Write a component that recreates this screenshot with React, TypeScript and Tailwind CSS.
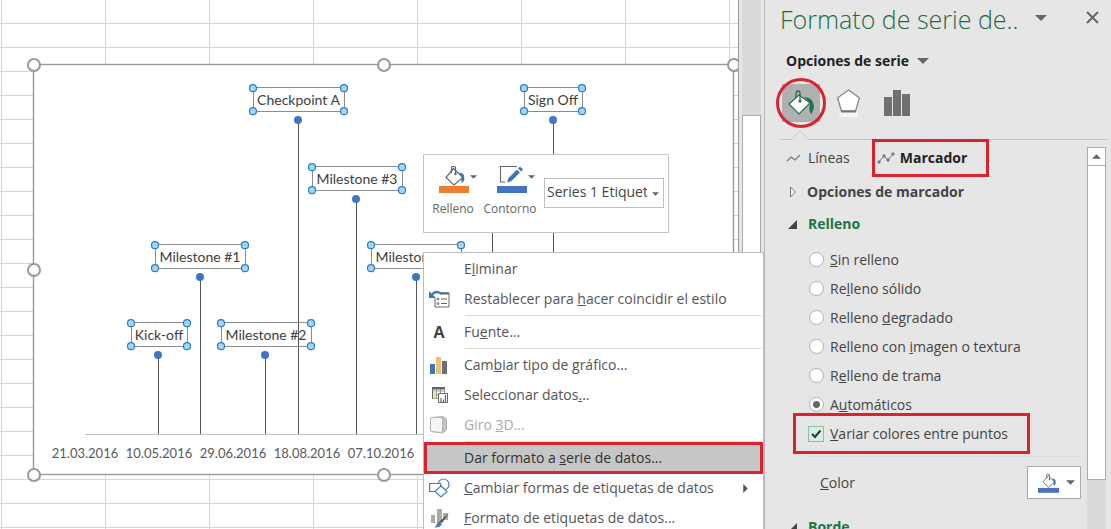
import type { ReactNode } from "react";

type LabelProps = { text: string; x: number; y: number; w: number; stem: number };

const labels: LabelProps[] = [
    { text: "Checkpoint A", x: 253, y: 88, w: 91, stem: 298 },
    { text: "Sign Off", x: 524, y: 88, w: 58, stem: 553 },
    { text: "Milestone #3", x: 312, y: 167, w: 90, stem: 356 },
    { text: "Milestone #1", x: 155, y: 245, w: 90, stem: 200 },
    { text: "Milestone #4", x: 371, y: 245, w: 90, stem: 416 },
    { text: "Kick-off", x: 131, y: 323, w: 56, stem: 158 },
    { text: "Milestone #2", x: 221, y: 323, w: 90, stem: 265 },
];

const dates = ["21.03.2016", "10.05.2016", "29.06.2016", "18.08.2016", "07.10.2016"];

const chartHandles = [
    [34, 65],
    [384, 65],
    [734, 65],
    [34, 270],
    [34, 475],
    [384, 475],
];

function Chart() {
    return (
        <svg width="711" height="424" viewBox="27 58 711 424" className="block shrink-0">
            <rect x="33.5" y="64.5" width="700" height="410" fill="#fff" stroke="#999" strokeWidth="1.4" />
            <path d="M85 434.5H700" stroke="#bfbfbf" />
            <path d="M492.5 230V434" stroke="#555" />
            {labels.map((l) => (
                <g key={l.text}>
                    <path d={`M${l.stem + 0.5} ${l.y + 32}V434`} stroke="#555" />
                    <circle cx={l.stem} cy={l.y + 32} r="4" fill="#4472c4" />
                </g>
            ))}
            {labels.map((l) => (
                <g key={l.text}>
                    <rect x={l.x + 0.5} y={l.y - 0.5} width={l.w} height="24" fill="none" stroke="#8c8c8c" />
                    {[0, l.w].map((dx) =>
                        [0, 23].map((dy) => (
                            <circle
                                key={`${dx}-${dy}`}
                                cx={l.x + dx}
                                cy={l.y + dy + 0.2}
                                r="3.5"
                                fill="#a6d5fa"
                                stroke="#2a7fc4"
                                strokeWidth="1.2"
                            />
                        ))
                    )}
                    <text x={l.x + l.w / 2} y={l.y + 17} textAnchor="middle" fill="#404040" className="font-['Lato',sans-serif] text-[14px]">
                        {l.text}
                    </text>
                </g>
            ))}
            {dates.map((d, i) => (
                <text key={d} x={85 + i * 74} y="458" textAnchor="middle" fill="#595959" className="font-['Lato',sans-serif] text-[13px]">
                    {d}
                </text>
            ))}
            {chartHandles.map(([x, y]) => (
                <circle key={`${x}-${y}`} cx={x} cy={y} r="6" fill="#fff" stroke="#999" strokeWidth="2" />
            ))}
        </svg>
    );
}

function Caret({ className }: { className?: string }) {
    return (
        <svg viewBox="0 0 12 6" className={className} fill="#666">
            <path d="M0 0h12L6 6z" />
        </svg>
    );
}

function Bucket({ bar, className }: { bar: string; className: string }) {
    return (
        <svg viewBox="0 0 30 28" className={className}>
            <path d="M14.500 3.500L24 12.500L15 20L7 12.500Z" fill="#fff" stroke="#666" strokeWidth="1.200" />
            <path d="M12.500 8V2.500Q12.500 1.500 13.500 1.500H15.500Q16.500 1.500 16.500 2.500V9" fill="none" stroke="#666" strokeWidth="1.200" />
            <circle cx="16.500" cy="9" r="1.200" fill="#666" />
            <path d="M20 7.500Q25 8 25.200 11.500V15.500L22.600 18.500L22.200 11Z" fill="#3f78b0" />
            <path d="M0 21h30v7H0z" fill={bar} />
        </svg>
    );
}

function MiniToolbar() {
    return (
        <div className="absolute left-[423px] top-[154px] flex h-[79px] w-[246px] items-start border border-[#c6c6c6] bg-white pt-2">
            <button type="button" className="ml-[7px] w-[44px] text-xs text-[#666]">
                <span className="flex items-center gap-px">
                    <Bucket bar="#ed7d31" className="ml-[8px] h-[28px] w-[30px] shrink-0 translate-y-[2px]" />
                    <Caret className="h-[4px] w-[7px] shrink-0" />
                </span>
                <span className="mt-[10px] block">Relleno</span>
            </button>
            <button type="button" className="ml-[7px] w-[56px] text-xs text-[#666]">
                <span className="flex items-center gap-px">
                    <svg viewBox="0 0 30 28" className="ml-[15px] h-[28px] w-[30px] shrink-0 translate-y-[2px]">
                        <path d="M20 1.500H3.500V17H8" fill="none" stroke="#666" strokeWidth="1.100" />
                        <path d="M10 17.500L11.500 13L20 4.500L23 7.500L14.500 16Z" fill="#3f78b0" />
                        <path d="M21 3.500L23 1.500L26 4.500L24 6.500Z" fill="#3f78b0" />
                        <path d="M0 21h30v7H0z" fill="#4472c4" />
                    </svg>
                    <Caret className="h-[4px] w-[7px] shrink-0" />
                </span>
                <span className="mt-[10px] block">Contorno</span>
            </button>
            <div className="relative ml-[6px] mt-[15px] h-[30px] w-[120px]">
                <select aria-label="Elemento del gráfico" className="h-full w-full appearance-none overflow-hidden border border-[#c0c0c0] bg-white pb-[2px] pl-[2px] pr-4 text-sm text-[#444]">
                    <option>Series 1 Etiquetas de datos</option>
                </select>
                <Caret className="pointer-events-none absolute right-[5px] top-[14px] h-[4px] w-[7px]" />
            </div>
        </div>
    );
}

function MenuItem({ icon, children, className = "text-[#555]" }: { icon?: ReactNode; children: ReactNode; className?: string }) {
    return (
        <li>
            <button type="button" className={`flex h-[30px] w-full items-center text-left ${className}`}>
                <span className="flex w-[39px] shrink-0 items-center pl-1">{icon}</span>
                {children}
            </button>
        </li>
    );
}

function Separator() {
    return <li className="my-px ml-[40px] h-px bg-[#dcdcdc]" />;
}

function ContextMenu() {
    return (
        <ul className="absolute left-[423px] top-[252px] z-10 w-[341px] border border-[#bdbdbd] bg-white px-px pt-px text-sm">
            <MenuItem>
                <span>E<u>l</u>iminar</span>
            </MenuItem>
            <MenuItem
                icon={
                    <svg width="22" height="20" viewBox="0 0 22 20" fill="none">
                        <path d="M10 4H20V18H6V9" stroke="#666" />
                        <path d="M11 3.500h9v2h-9z" fill="#666" />
                        <path d="M12 10h6M12 14.500h6" stroke="#666" />
                        <circle cx="9" cy="10" r="1" stroke="#666" />
                        <circle cx="9" cy="14.500" r="1" stroke="#666" />
                        <path d="M3 6Q6 1 12 4.500" stroke="#3f78b0" strokeWidth="2.400" />
                        <path d="M0 2V9H7Z" fill="#3f78b0" />
                    </svg>
                }
            >
                <span>Restablecer para <u>h</u>acer coincidir el estilo</span>
            </MenuItem>
            <Separator />
            <MenuItem icon={<b className="w-[20px] text-center text-base text-[#444]">A</b>}>
                <span>Fu<u>e</u>nte...</span>
            </MenuItem>
            <Separator />
            <MenuItem
                icon={
                    <svg width="20" height="20" viewBox="0 0 20 20">
                        <path d="M1 9h5v10H1z" fill="#3f78b0" />
                        <path d="M7 2h5v17H7z" fill="#e8c27c" />
                        <path d="M13 6h5v13h-5z" fill="#6e6e6e" />
                    </svg>
                }
            >
                <span>Cam<u>b</u>iar tipo de gráfico...</span>
            </MenuItem>
            <MenuItem
                icon={
                    <svg width="20" height="20" viewBox="0 0 20 20" fill="none">
                        <path d="M3.500 2.500h12v11h-12zM3.500 6h12M3.500 9.500h12M7.500 4v9M11.500 4v9" stroke="#999" />
                        <path d="M4 6.500h3v7h-3z" fill="#f2dcb0" />
                        <path d="M3 2h13v2.500H3zM3 2h1v12H3z" fill="#666" />
                        <path d="M9.500 8.500h9v9h-9z" fill="#fff" stroke="#666" />
                        <path d="M12 17v-4M14.500 17v-2.500M16.500 17v-7" stroke="#666" strokeWidth="1.200" />
                    </svg>
                }
            >
                <span>Seleccionar datos<u>.</u>..</span>
            </MenuItem>
            <MenuItem
                className="text-[#aaa]"
                icon={
                    <svg width="20" height="20" viewBox="0 0 20 20" stroke="#b3b3b3" strokeLinejoin="round">
                        <path d="M3 2.500L14 1.500L17.500 4V15L13.500 18L3 16.500Q1.500 16 1.500 15V4Q1.500 3 3 2.500Z" fill="#c4c4c4" />
                        <path d="M3 2.500H12Q13.500 2.500 13.500 4V16L12 17.500L3 16.500Q1.500 16 1.500 15V4Q1.500 2.500 3 2.500Z" fill="#f5f5f5" />
                    </svg>
                }
            >
                <span>Giro <u>3</u>D...</span>
            </MenuItem>
            <Separator />
            <MenuItem className="bg-[#c6c6c6] text-[#333] outline-3 -outline-offset-2 outline-[#d9232e]">
                <span>Dar formato a <u>s</u>erie de datos...</span>
            </MenuItem>
            <MenuItem
                icon={
                    <svg width="22" height="20" viewBox="0 0 22 20" fill="#fff" stroke="#4a7ebb" strokeWidth="1.200">
                        <circle cx="14.500" cy="6.500" r="5.500" />
                        <path d="M.6 5.500h11v8H.6z" />
                        <path d="M12 8l6 5.500-6 5.500-6-5.500z" />
                    </svg>
                }
            >
                <span><u>C</u>ambiar formas de etiquetas de datos</span>
                <svg viewBox="0 0 5 10" className="ml-auto mr-[14px] h-[9px] w-[5px]" fill="#555">
                    <path d="M0 0l5 5-5 5z" />
                </svg>
            </MenuItem>
            <MenuItem
                icon={
                    <svg width="22" height="22" viewBox="0 0 22 22">
                        <path d="M2 8h4v8H2zM8 2h5v14H8zM14 6h5v7h-5z" fill="#aaa" />
                        <path d="M20 6L13 16L10.500 14.500Z" fill="#555" />
                        <path d="M10 14.500L13 17Q11 21 5 20.500Q8 19 8 16.500Z" fill="#3f78b0" />
                    </svg>
                }
            >
                <span><u>F</u>ormato de etiquetas de datos...</span>
            </MenuItem>
        </ul>
    );
}

function Radio({ id, checked, children }: { id: string; checked?: boolean; children: ReactNode }) {
    return (
        <div className="flex h-[29px] items-center gap-[6px]">
            <input
                type="radio"
                name="relleno"
                id={id}
                defaultChecked={checked}
                className="size-[15px] appearance-none rounded-full border border-[#b0b0b0] bg-white checked:bg-[radial-gradient(circle,#666_0_3px,#fff_4px)]"
            />
            <label htmlFor={id}>{children}</label>
        </div>
    );
}

function PaneHeader() {
    return (
        <header className="pl-[15px]">
            <div className="flex h-[40px] items-center">
                <h1 className="whitespace-nowrap text-[25px] font-light text-[#1e6b41]">Formato de serie de..</h1>
                <button type="button" aria-label="Opciones del panel" className="mb-[5px] ml-auto">
                    <Caret className="h-[6px] w-[12px]" />
                </button>
                <button type="button" aria-label="Cerrar" className="mb-[5px] ml-[39px] mr-[12px]">
                    <svg width="13" height="13" viewBox="0 0 13 13" stroke="#666" strokeWidth="2">
                        <path d="M1 1l11 11M12 1L1 12" />
                    </svg>
                </button>
            </div>
            <button type="button" className="ml-[6px] flex h-[42px] items-center gap-2 font-bold text-[#222]">
                Opciones de serie
                <Caret className="h-[6px] w-[12px]" />
            </button>
            <div className="ml-[2px] mt-[2px] flex items-center">
                <button type="button" aria-label="Relleno y línea" className="relative flex size-[38px] items-center justify-center bg-[#b0b0b0]">
                    <svg width="28" height="28" viewBox="0 0 28 28">
                        <path d="M12 6L23 14L12 25L2 15Z" fill="#fff" stroke="#217346" strokeWidth="1.200" />
                        <path d="M9 9V4.500Q9 2 11 2T13 4.500V12" fill="none" stroke="#217346" strokeWidth="1.300" />
                        <circle cx="13" cy="12" r="1.600" fill="#217346" />
                        <path d="M17 8Q26 8.500 27 17Q27 20 24.500 25Q21.500 22 22.500 17L23.500 14Z" fill="#217346" />
                    </svg>
                    <span className="absolute -inset-[6px] rounded-full border-3 border-[#d9232e]" />
                </button>
                <button type="button" aria-label="Efectos" className="ml-4">
                    <svg width="26" height="30" viewBox="0 0 26 30">
                        <path d="M4 24H21L22 29H3Z" fill="#f5f5f5" />
                        <path d="M12.500 2L23.500 10L19.500 23H5.500L1.500 10Z" fill="#fff" stroke="#888" strokeWidth="1.300" />
                        <path d="M5 23.500h15" stroke="#777" strokeWidth="2" />
                    </svg>
                </button>
                <button type="button" aria-label="Opciones de serie" className="ml-[22px]">
                    <svg width="26" height="26" viewBox="0 0 26 26" fill="#707070">
                        <path d="M0 7h8v19H0zM9 0h8v26H9zM18 4h8v22h-8z" />
                    </svg>
                </button>
            </div>
        </header>
    );
}

function FormatPane() {
    return (
        <aside className="flex w-[347px] shrink-0 flex-col border-l border-[#b8b8b8] bg-[#e6e6e6] text-sm text-[#444]">
            <PaneHeader />
            <div className="ml-[15px] mr-1 mt-[8px] flex h-[10px] shrink-0 items-end">
                <span className="h-px w-3 bg-[#c6c6c6]" />
                <svg width="16" height="10" viewBox="0 0 16 10" fill="none" stroke="#c6c6c6">
                    <path d="M0 9.500L8 .5L16 9.500" />
                </svg>
                <span className="h-px flex-1 bg-[#c6c6c6]" />
            </div>
            <div className="-mt-px flex flex-1 pr-[5px]">
                <div className="flex-1 pl-[21px]">
                    <div className="flex items-center">
                        <button type="button" className="flex items-center gap-[7px]">
                            <svg width="15" height="9" viewBox="0 0 15 9" fill="none" stroke="#777" strokeWidth="1.200">
                                <path d="M1 7L5 3L9 6L14 1" />
                            </svg>
                            Líneas
                        </button>
                        <button type="button" className="ml-[22px] flex h-[38px] w-[117px] items-center gap-[5px] border-3 border-[#d9232e] pl-[2px] font-bold text-[#222]">
                            <svg width="18" height="13" viewBox="0 0 18 13" fill="#777" stroke="#777">
                                <path d="M2 10L7 4L11 8L16 2" fill="none" />
                                <circle cx="2" cy="10" r="1.200" />
                                <circle cx="7" cy="4" r="1.200" />
                                <circle cx="11" cy="8" r="1.200" />
                                <circle cx="16" cy="2" r="1.200" />
                            </svg>
                            Marcador
                        </button>
                    </div>
                    <button type="button" className="flex h-[30px] items-center gap-[11px] pl-1 font-bold">
                        <svg width="6" height="12" viewBox="0 0 6 12" fill="#fff" stroke="#777">
                            <path d="M.5 1L5.500 6L.5 11Z" />
                        </svg>
                        Opciones de marcador
                    </button>
                    <button type="button" className="flex h-[34px] items-center gap-[11px] pl-[2px] font-bold text-[#217346]">
                        <svg width="9" height="9" viewBox="0 0 9 9" fill="#444">
                            <path d="M9 0V9H0Z" />
                        </svg>
                        Relleno
                    </button>
                    <div className="mt-1 pl-[23px]">
                        <Radio id="sin"><u>S</u>in relleno</Radio>
                        <Radio id="solido">Re<u>l</u>leno sólido</Radio>
                        <Radio id="degradado">Relleno <u>d</u>egradado</Radio>
                        <Radio id="imagen">Relleno con <u>i</u>magen o textura</Radio>
                        <Radio id="trama">R<u>e</u>lleno de trama</Radio>
                        <Radio id="auto" checked>A<u>u</u>tomáticos</Radio>
                    </div>
                    <div className="relative -mt-[6px] ml-[7px] flex h-[41px] w-[237px] items-center gap-[6px] border-3 border-[#d9232e] pl-3">
                        <span className="relative flex">
                            <input type="checkbox" id="variar" defaultChecked className="size-4 appearance-none border border-[#8cbfa3] bg-[#d3f0e0]" />
                            <svg viewBox="0 0 16 16" className="pointer-events-none absolute inset-0" fill="none" stroke="#333" strokeWidth="2">
                                <path d="M4 8L7 11L12.500 4.500" />
                            </svg>
                        </span>
                        <label htmlFor="variar"><u>V</u>ariar colores entre puntos</label>
                    </div>
                    <div className="ml-[22px] mr-[6px] mt-[2px] flex items-center justify-between border-t border-[#dcdcdc] pl-3 pt-[9px]">
                        <span><u>C</u>olor</span>
                        <button type="button" aria-label="Color" className="flex h-[33px] w-[54px] items-center justify-between border border-[#ababab] bg-white pl-[10px] pr-[5px]">
                            <Bucket bar="#4472c4" className="h-[20px] w-[21px]" />
                            <Caret className="h-[5px] w-[9px]" />
                        </button>
                    </div>
                    <button type="button" className="mt-3 flex h-[32px] items-center gap-[11px] pl-[2px] font-bold text-[#217346]">
                        <svg width="9" height="9" viewBox="0 0 9 9" fill="#444">
                            <path d="M9 0V9H0Z" />
                        </svg>
                        Borde
                    </button>
                </div>
                <div className="mt-2 w-[19px] shrink-0 bg-[#dadada]">
                    <button type="button" aria-label="Subir" className="flex h-[19px] w-full items-center justify-center border border-[#ababab] bg-white">
                        <Caret className="h-[5px] w-[9px] rotate-180" />
                    </button>
                    <div className="h-[314px] border border-t-0 border-[#ababab] bg-white" />
                </div>
            </div>
        </aside>
    );
}

export default function App() {
    return (
        <div className="flex h-screen overflow-hidden bg-[#e6e6e6] font-['Open_Sans','Noto_Sans',sans-serif]">
            <main className="relative min-w-0 flex-1">
                <div className="h-full overflow-hidden border-r border-[#9a9a9a] bg-white bg-[linear-gradient(to_right,#d4d4d4_1px,transparent_1px),linear-gradient(to_bottom,#d4d4d4_1px,transparent_1px)] bg-[size:104px_24px] bg-[position:1px_23px] pl-[27px] pt-[58px]">
                    <Chart />
                </div>
                <MiniToolbar />
                <ContextMenu />
            </main>
            <div className="w-[25px] shrink-0 px-[3px]">
                <div className="h-full bg-[#dadada] pt-[115px]">
                    <div className="h-[200px] border border-[#ababab] bg-white" />
                </div>
            </div>
            <FormatPane />
        </div>
    );
}
